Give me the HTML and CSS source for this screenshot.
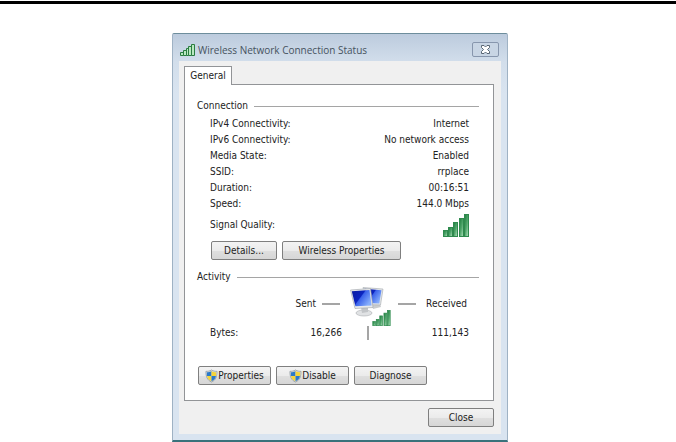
FILE: index.html
```
<!DOCTYPE html>
<html lang="en">
<head>
  <meta charset="UTF-8">
  <meta name="viewport" content="width=device-width, initial-scale=1.0">
  <title>Wireless Network Connection Status</title>
  <link rel="stylesheet" href="styles.css">
</head>
<body>

  <!-- Shared icons -->
  <svg class="icon-defs" aria-hidden="true">
    <defs>
      <linearGradient id="green" x1="0" y1="0" x2="1" y2="1">
        <stop offset="0" stop-color="#1c7c3c"/>
        <stop offset="0.5" stop-color="#4fa56a"/>
        <stop offset="1" stop-color="#b5e6c2"/>
      </linearGradient>
      <linearGradient id="screen" x1="0" y1="0" x2="1" y2="0.6">
        <stop offset="0" stop-color="#0a1c9e"/>
        <stop offset="0.5" stop-color="#0c24c0"/>
        <stop offset="0.55" stop-color="#3a62ea"/>
        <stop offset="1" stop-color="#86aefc"/>
      </linearGradient>
      <symbol id="bars" viewBox="0 0 26 23">
        <g fill="url(#green)" stroke="#2f8a4e" stroke-width="1">
          <rect x="0.5" y="16.5" width="4" height="6"/>
          <rect x="5.5" y="13.5" width="4" height="9"/>
          <rect x="10.5" y="8.5" width="4" height="14"/>
          <rect x="16.5" y="4.5" width="4" height="18"/>
          <rect x="21.5" y="0.5" width="4" height="22"/>
        </g>
      </symbol>
      <symbol id="shield" viewBox="0 0 14 14">
        <path d="M7 0.5C5 1.8 3 2 1 2C0.8 7.5 2.5 11.5 7 13.5C11.5 11.5 13.2 7.5 13 2C11 2 9 1.8 7 0.5Z" fill="#d8dde0" stroke="#8e979d" stroke-width="0.8"/>
        <path d="M7 1.6C5.3 2.7 3.7 3 2 3V7H7Z" fill="#2b79c9"/>
        <path d="M7 1.6C8.7 2.7 10.3 3 12 3V7H7Z" fill="#f5d53a"/>
        <path d="M7 7H2.2C2.7 9.6 4.2 11.5 7 12.7Z" fill="#f5d53a"/>
        <path d="M7 7H11.8C11.3 9.6 9.8 11.5 7 12.7Z" fill="#2b79c9"/>
      </symbol>
    </defs>
  </svg>

  <hr class="page-rule">

  <div class="page">
    <main class="dialog">
      <header class="title-bar">
        <svg class="title-icon" viewBox="0 0 15 12" aria-hidden="true">
          <g fill="#b9e8c0" stroke="#2a7d40">
            <path d="M0.5 8.5H3.5V11.5H0.5Z"/>
            <path d="M3.5 6.5H6.5V11.5H3.5Z"/>
            <path d="M6.5 4.5H8.5V11.5H6.5Z"/>
            <path d="M8.5 2.5H11.5V11.5H8.5Z"/>
            <path d="M11.5 0.5H14.5V11.5H11.5Z"/>
          </g>
        </svg>
        <h1>Wireless Network Connection Status</h1>
        <button type="button" class="close-x" aria-label="Close window">
          <svg viewBox="0 0 11 9" aria-hidden="true">
            <path d="M1.5 0.5H4L5.5 2L7 0.5H9.5V2.5L7.5 4.5L9.5 6.5V8.5H7L5.5 7L4 8.5H1.5V6.5L3.5 4.5L1.5 2.5Z" fill="#fff" stroke="#596674"/>
          </svg>
        </button>
      </header>

      <div class="dialog-body">
        <div class="tabs">
          <button type="button" class="tab">General</button>
        </div>

        <div class="panel">
          <!-- Connection -->
          <h2>Connection</h2>
          <table class="connection">
            <tr><th scope="row">IPv4 Connectivity:</th><td>Internet</td></tr>
            <tr><th scope="row">IPv6 Connectivity:</th><td>No network access</td></tr>
            <tr><th scope="row">Media State:</th><td>Enabled</td></tr>
            <tr><th scope="row">SSID:</th><td>rrplace</td></tr>
            <tr><th scope="row">Duration:</th><td>00:16:51</td></tr>
            <tr><th scope="row">Speed:</th><td>144.0 Mbps</td></tr>
            <tr class="signal">
              <th scope="row">Signal Quality:</th>
              <td><svg class="signal-icon" role="img" aria-label="Excellent"><use href="#bars"/></svg></td>
            </tr>
          </table>
          <div class="buttons details">
            <button type="button" class="small">Details...</button>
            <button type="button" class="wide">Wireless Properties</button>
          </div>

          <!-- Activity -->
          <h2>Activity</h2>
          <div class="activity">
            <div class="sent">Sent</div>
            <div class="computers">
              <svg class="monitors" viewBox="0 0 34 30" aria-hidden="true">
                <path d="M22 18L30 17L31 20L23 22Z" fill="#c9cccf"/>
                <path d="M13 0.5L33 2L30.5 18L17 17.5Z" fill="#e4e7e9" stroke="#a3a8ad" stroke-width="0.6"/>
                <path d="M14.5 1.8L31.5 3.2L29.3 16.5L17 16Z" fill="url(#screen)"/>
                <ellipse cx="14" cy="26" rx="8" ry="3" fill="#e0e2e4" stroke="#a9adb0" stroke-width="0.6"/>
                <path d="M11 20L18 21L18 25L12 26Z" fill="#c2c5c8"/>
                <path d="M0.5 3L20.5 1.5L23 20.5L5 21.5Z" fill="#e8eaeb" stroke="#9ea3a8" stroke-width="0.6"/>
                <path d="M1.8 4.2L19.5 3L21.6 18.5L5.4 19.2Z" fill="url(#screen)"/>
              </svg>
              <svg class="small-bars" aria-hidden="true"><use href="#bars"/></svg>
            </div>
            <div class="received">Received</div>
            <div>Bytes:</div>
            <div class="number">16,266</div>
            <div class="divider"></div>
            <div class="number">111,143</div>
          </div>
          <div class="buttons actions">
            <button type="button"><svg class="shield" aria-hidden="true"><use href="#shield"/></svg>Properties</button>
            <button type="button"><svg class="shield" aria-hidden="true"><use href="#shield"/></svg>Disable</button>
            <button type="button">Diagnose</button>
          </div>
        </div>

        <footer class="dialog-footer">
          <button type="button" class="small">Close</button>
        </footer>
      </div>
    </main>
  </div>

</body>
</html>
```
FILE: styles.css
```
* {
  box-sizing: border-box;
}

body {
  margin: 0;
  background-color: #fff;
  color: #222;
  font: 10px/16px "DejaVu Sans Condensed", "DejaVu Sans", sans-serif;
}

.icon-defs {
  position: absolute;
  width: 0;
  height: 0;
}

.page-rule {
  height: 3px;
  margin: 1px 0 29px;
  border: 0;
  background-color: #000;
}

.page {
  padding-left: 4px;
}

/* Window frame */
.dialog {
  max-width: 336px;
  margin: 0 auto;
  padding: 0 6px 6px;
  border: 1px solid #9fb2c4;
  border-top-color: #6d8d9c;
  border-bottom: 2px solid #39727b;
  border-radius: 2px 2px 0 0;
  background: linear-gradient(#bccbdd, #d2deeb 28px, #d9e4f0 60px);
}

.title-bar {
  display: flex;
  align-items: center;
  height: 27px;
  padding: 4px 2px 0 1px;
}

.title-icon {
  width: 15px;
  height: 12px;
}

h1 {
  flex: 1;
  margin: 0 0 0 3px;
  font: 10px/16px "Open Sans", sans-serif;
  color: #46525e;
}

.close-x {
  display: flex;
  align-items: center;
  justify-content: center;
  width: 27px;
  height: 15px;
  padding: 0;
  border: 1px solid #8796ad;
  border-radius: 2px;
  background: #c8d5e4;
}

.close-x svg {
  width: 11px;
  height: 9px;
}

.dialog-body {
  padding: 5px 7px 7px 5px;
  background-color: #f0f0f0;
}

/* Tab */
.tabs {
  display: flex;
}

.tab {
  position: relative;
  width: 48px;
  height: 19px;
  margin-bottom: -1px;
  padding: 0;
  border: 1px solid #929497;
  border-bottom: 0;
  background-color: #fff;
  color: inherit;
  font: inherit;
}

.panel {
  padding: 13px 14px 15px 12px;
  border: 1px solid #929497;
  background-color: #fff;
}

/* Section headings with a rule */
h2 {
  display: flex;
  align-items: center;
  gap: 6px;
  margin: 0 0 2px;
  font: inherit;
}

h2::after {
  content: "";
  flex: 1;
  height: 1px;
  background-color: #a5a5a5;
}

/* Connection */
.connection {
  width: 100%;
  border-collapse: collapse;
}

.connection th {
  padding: 0 0 0 13px;
  text-align: left;
  font-weight: normal;
}

.connection td {
  padding: 0 10px 0 0;
  text-align: right;
}

.signal th,
.signal td {
  height: 26px;
}

.signal-icon {
  display: block;
  width: 26px;
  height: 23px;
  margin-left: auto;
}

/* Buttons */
.buttons {
  display: flex;
  gap: 5px;
}

.details {
  padding: 3px 0 9px 14px;
}

.buttons button,
.dialog-footer button {
  display: flex;
  align-items: center;
  justify-content: center;
  width: 73px;
  height: 19px;
  padding: 0;
  border: 1px solid #7f7f7f;
  border-radius: 2px;
  background: linear-gradient(#f3f3f3, #ebebeb 50%, #dfdfdf 51%, #d6d6d6);
  color: inherit;
  font: inherit;
}

.buttons .small,
.dialog-footer .small {
  width: 66px;
}

.buttons .wide {
  width: 119px;
}

.shield {
  width: 13px;
  height: 14px;
}

/* Activity */
.activity {
  display: grid;
  grid-template-columns: 60px 72px 54px 1fr;
  row-gap: 4px;
  align-items: center;
  padding: 0 10px 0 13px;
}

.sent,
.received {
  display: flex;
  align-items: center;
  justify-content: space-between;
}

.sent {
  grid-column: 1 / 3;
  justify-content: flex-end;
  gap: 6px;
}

.sent::after,
.received::before {
  content: "";
  width: 18px;
  height: 2px;
  background-color: #a5a5a5;
}

.sent,
.received {
  margin: 0 2px;
}

.computers {
  position: relative;
  height: 34px;
  padding-left: 8px;
}

.monitors {
  display: block;
  width: 34px;
  height: 30px;
}

.small-bars {
  position: absolute;
  left: 30px;
  top: 23px;
  width: 19px;
  height: 16px;
}

.number {
  text-align: right;
}

.divider {
  width: 2px;
  height: 14px;
  margin-left: 25px;
  background-color: #a5a5a5;
}

.actions {
  padding: 25px 0 0 1px;
}

.dialog-footer {
  display: flex;
  justify-content: flex-end;
  padding-top: 7px;
}
```
